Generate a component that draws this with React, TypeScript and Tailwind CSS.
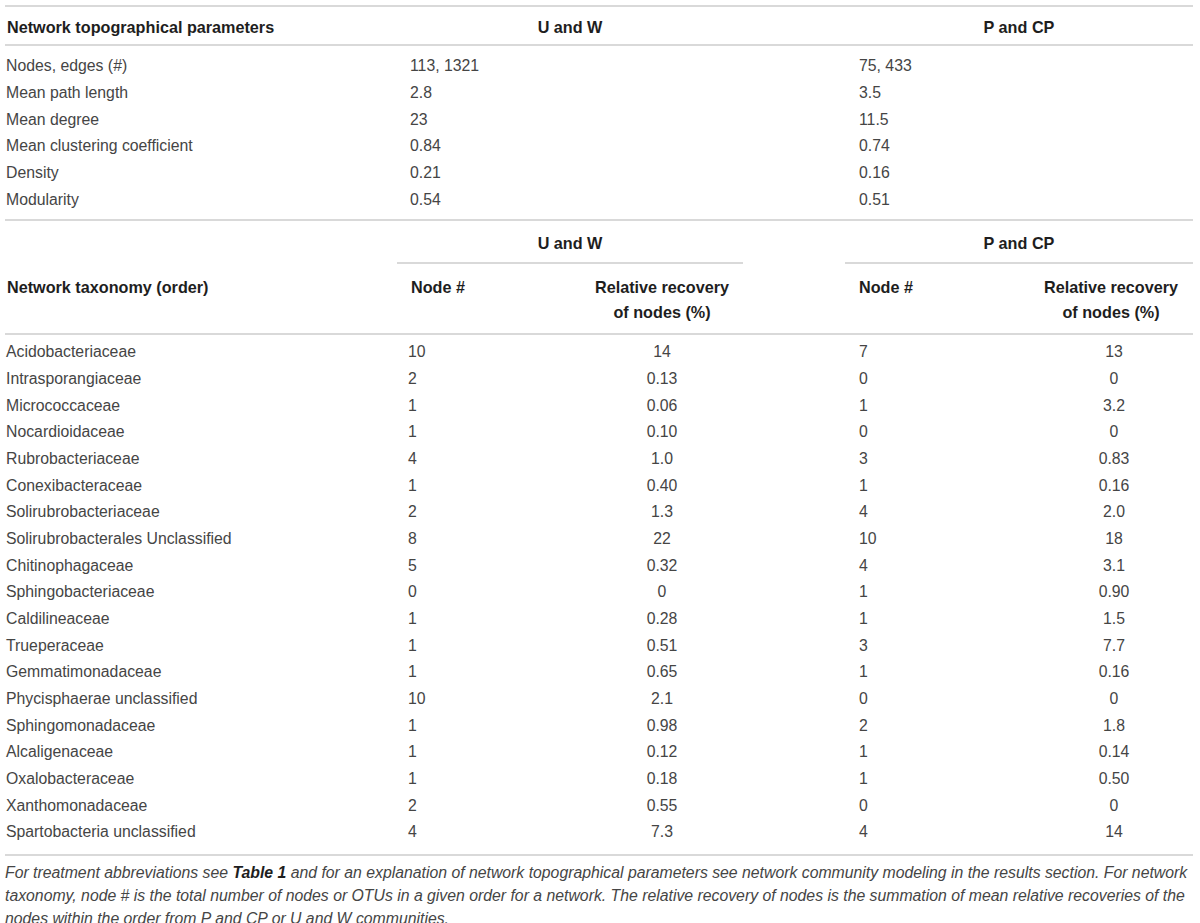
import React from "react";

const topRows: [string, string, string][] = [
  ["Nodes, edges (#)", "113, 1321", "75, 433"],
  ["Mean path length", "2.8", "3.5"],
  ["Mean degree", "23", "11.5"],
  ["Mean clustering coefficient", "0.84", "0.74"],
  ["Density", "0.21", "0.16"],
  ["Modularity", "0.54", "0.51"],
];

const taxRows: [string, string, string, string, string][] = [
  ["Acidobacteriaceae", "10", "14", "7", "13"],
  ["Intrasporangiaceae", "2", "0.13", "0", "0"],
  ["Micrococcaceae", "1", "0.06", "1", "3.2"],
  ["Nocardioidaceae", "1", "0.10", "0", "0"],
  ["Rubrobacteriaceae", "4", "1.0", "3", "0.83"],
  ["Conexibacteraceae", "1", "0.40", "1", "0.16"],
  ["Solirubrobacteriaceae", "2", "1.3", "4", "2.0"],
  ["Solirubrobacterales Unclassified", "8", "22", "10", "18"],
  ["Chitinophagaceae", "5", "0.32", "4", "3.1"],
  ["Sphingobacteriaceae", "0", "0", "1", "0.90"],
  ["Caldilineaceae", "1", "0.28", "1", "1.5"],
  ["Trueperaceae", "1", "0.51", "3", "7.7"],
  ["Gemmatimonadaceae", "1", "0.65", "1", "0.16"],
  ["Phycisphaerae unclassified", "10", "2.1", "0", "0"],
  ["Sphingomonadaceae", "1", "0.98", "2", "1.8"],
  ["Alcaligenaceae", "1", "0.12", "1", "0.14"],
  ["Oxalobacteraceae", "1", "0.18", "1", "0.50"],
  ["Xanthomonadaceae", "2", "0.55", "0", "0"],
  ["Spartobacteria unclassified", "4", "7.3", "4", "14"],
];

export default function App() {
  return (
    <div className="w-[1200px] h-[923px] bg-white font-['Liberation_Sans',Arial,sans-serif] text-[15.8px] text-[#454545] overflow-hidden">
      <div className="ml-[5px] w-[1188px] pt-[5px]">
        {/* Top table header */}
        <div className="h-[2px] bg-[#d9d9d9]" />
        <div className="flex h-[37px] items-center pt-[4px] font-bold text-[16.2px] text-[#1e1e1e]">
          <div className="w-[392px] pl-[2px]">Network topographical parameters</div>
          <div className="w-[346px] text-center">U and W</div>
          <div className="w-[102px]" />
          <div className="w-[348px] text-center">P and CP</div>
        </div>
        <div className="h-[2px] bg-[#d9d9d9]" />
        <div className="h-[173px] pt-[7px]">
          {topRows.map((r) => (
            <div key={r[0]} className="flex h-[26.67px] items-center">
              <div className="w-[392px] pl-[1px]">{r[0]}</div>
              <div className="w-[346px] pl-[13px]">{r[1]}</div>
              <div className="w-[102px]" />
              <div className="w-[348px] pl-[14px]">{r[2]}</div>
            </div>
          ))}
        </div>
        <div className="h-[2px] bg-[#d9d9d9]" />

        {/* Second table header */}
        <div className="flex font-bold text-[16.2px] text-[#1e1e1e]">
          <div className="w-[392px] pl-[2px] pt-[54px] leading-[25px]">Network taxonomy (order)</div>
          <div className="w-[346px] flex flex-col">
            <div className="pt-[12px] leading-[20px] text-center">U and W</div>
            <div className="mt-[9px] h-[2px] bg-[#d9d9d9]" />
            <div className="flex pt-[11px] pb-[8px] leading-[25px]">
              <div className="w-[184px] pl-[14px]">Node #</div>
              <div className="w-[162px] text-center">
                Relative recovery
                <br />
                of nodes (%)
              </div>
            </div>
          </div>
          <div className="w-[102px]" />
          <div className="w-[348px] flex flex-col">
            <div className="pt-[12px] leading-[20px] text-center">P and CP</div>
            <div className="mt-[9px] h-[2px] bg-[#d9d9d9]" />
            <div className="flex pt-[11px] pb-[8px] leading-[25px]">
              <div className="w-[184px] pl-[14px]">Node #</div>
              <div className="w-[164px] text-center">
                Relative recovery
                <br />
                of nodes (%)
              </div>
            </div>
          </div>
        </div>
        <div className="h-[2px] bg-[#d9d9d9]" />
        <div className="h-[519px] pt-[4px]">
          {taxRows.map((r) => (
            <div key={r[0]} className="flex h-[26.67px] items-center">
              <div className="w-[392px] pl-[1px]">{r[0]}</div>
              <div className="w-[184px] pl-[11px]">{r[1]}</div>
              <div className="w-[162px] text-center">{r[2]}</div>
              <div className="w-[102px]" />
              <div className="w-[184px] pl-[14px]">{r[3]}</div>
              <div className="w-[164px] text-center pl-[6px]">{r[4]}</div>
            </div>
          ))}
        </div>
        <p className="border-t-2 border-[#d9d9d9] pt-[5px] italic leading-[23px] text-[#454545]">
          For treatment abbreviations see <b className="text-[#1e1e1e]">Table 1</b> and for an explanation of network
          topographical parameters see network community modeling in the results section. For network taxonomy, node #
          is the total number of nodes or OTUs in a given order for a network. The relative recovery of nodes is the
          summation of mean relative recoveries of the nodes within the order from P and CP or U and W communities.
        </p>
      </div>
    </div>
  );
}
